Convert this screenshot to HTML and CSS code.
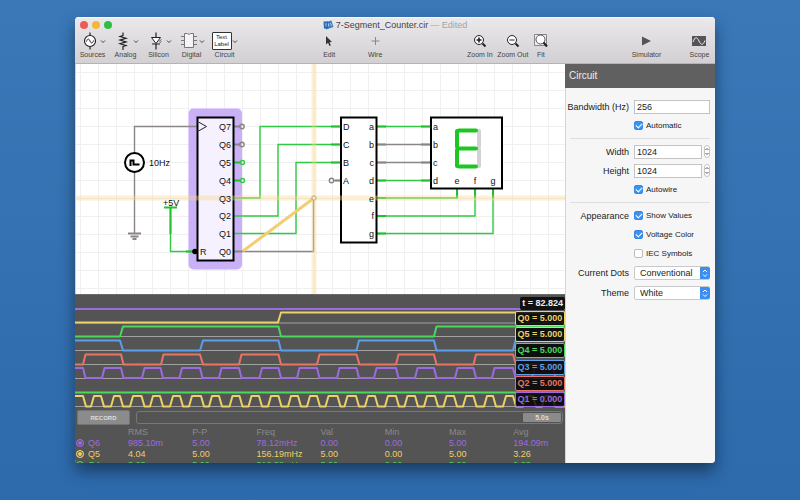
FILE: index.html
```html
<!DOCTYPE html>
<html lang="en">
<head>
<meta charset="utf-8">
<title>7-Segment_Counter.cir</title>
<link rel="stylesheet" href="styles.css">
</head>
<body>
<div class="window">
  <header class="chrome">
    <div class="titlebar">
      <div class="lights">
        <button class="light close" aria-label="Close"></button>
        <button class="light minimize" aria-label="Minimize"></button>
        <button class="light maximize" aria-label="Zoom window"></button>
      </div>
      <h1 class="title">
        <svg width="11" height="10" viewBox="0 0 11 10"><path d="M1 2.500 8.500.5 10.500 7 3 9.500Z" fill="#3c7fc4"/><path d="M.5 1.500h4.500l.5 7H1Z" fill="#2b69ad"/><path d="M3 3v3.500M5.500 3.500v3M7.500 3l1 3" stroke="#a9cdf0" stroke-width="1" fill="none"/></svg>
        <span>7-Segment_Counter.cir</span>
        <span class="edited">— Edited</span>
      </h1>
    </div>
    <nav class="toolbar">
      <div class="group">
        <button class="tool"><span class="glyph">
          <svg width="20" height="18" viewBox="0 0 20 18" fill="none" stroke="#222"><circle cx="10" cy="9" r="5.500" stroke-width="1.200" fill="#fff"/><path d="M10 .5v3M10 14.500v3" stroke-width="1.200"/><path d="M6.500 9.500c1-3.500 2.500-3 3.500-.5s2.500 3 3.500-.5"/></svg>
          <svg class="chev" width="6" height="5" viewBox="0 0 6 5"><path d="M1 1.500 3 3.500 5 1.500"/></svg></span>Sources</button>
        <button class="tool"><span class="glyph">
          <svg width="20" height="18" viewBox="0 0 20 18" fill="none" stroke="#222" stroke-width="1.200"><path d="M10 .5v3l-3 1 6 1.800-6 1.800 6 1.800-6 1.800 6 1.800-3 1v3.500"/></svg>
          <svg class="chev" width="6" height="5" viewBox="0 0 6 5"><path d="M1 1.500 3 3.500 5 1.500"/></svg></span>Analog</button>
        <button class="tool"><span class="glyph">
          <svg width="20" height="18" viewBox="0 0 20 18" fill="none" stroke="#222"><path d="M10 .5v5M10 12v5.500" stroke-width="1.200"/><path d="M5.500 5.500h9L10 11.500Z" fill="#fff"/><path d="M6 12h8" stroke-width="1.200"/><path d="m13 9.500 2.500-2M13.500 11l2-1.500" stroke="#666"/></svg>
          <svg class="chev" width="6" height="5" viewBox="0 0 6 5"><path d="M1 1.500 3 3.500 5 1.500"/></svg></span>Silicon</button>
        <button class="tool"><span class="glyph">
          <svg width="20" height="18" viewBox="0 0 20 18" fill="none" stroke="#777"><path d="M5.500 1.500h3q1.500 2 3 0h3v14h-9Z" fill="#f4f4f4"/><path d="M2 4.500h3.500M2 8.500h3.500M2 12.500h3.500M14.500 4.500H18M14.500 8.500H18M14.500 12.500H18"/></svg>
          <svg class="chev" width="6" height="5" viewBox="0 0 6 5"><path d="M1 1.500 3 3.500 5 1.500"/></svg></span>Digital</button>
        <button class="tool"><span class="glyph">
          <span class="textlabel">Text<br>Label</span>
          <svg class="chev" width="6" height="5" viewBox="0 0 6 5"><path d="M1 1.500 3 3.500 5 1.500"/></svg></span>Circuit</button>
      </div>
      <div class="group modes">
        <button class="tool"><span class="glyph">
          <svg width="20" height="18" viewBox="0 0 20 18"><path d="M7 4v8.500l2-1.700 1.500 3.200 1.400-.7-1.500-3 2.600-.3Z" fill="#333"/></svg></span>Edit</button>
        <button class="tool"><span class="glyph">
          <svg width="20" height="18" viewBox="0 0 20 18"><path d="M10.500 5v8M6.500 9h8" stroke="#888" fill="none"/></svg></span>Wire</button>
      </div>
      <div class="group">
        <button class="tool"><span class="glyph">
          <svg width="20" height="18" viewBox="0 0 20 18" fill="none" stroke="#222"><circle cx="9" cy="8" r="4.500" fill="#fff"/><path d="M6.500 8h5M9 5.500v5" stroke-width="1.600"/><path d="m12.500 11.500 3 3" stroke-width="2"/></svg></span>Zoom In</button>
        <button class="tool"><span class="glyph">
          <svg width="20" height="18" viewBox="0 0 20 18" fill="none" stroke="#222"><circle cx="9" cy="8" r="4.500" fill="#fff"/><path d="M6.500 8h5"/><path d="m12.500 11.500 3 3" stroke-width="2"/></svg></span>Zoom Out</button>
        <button class="tool narrow"><span class="glyph">
          <svg width="20" height="18" viewBox="0 0 20 18" fill="none" stroke="#222"><path d="M3.500 2.500h12v11h-12Z" stroke="#888" fill="#eee"/><circle cx="9.500" cy="7.500" r="4.500" stroke="#555" fill="#fff"/><path d="m12.500 10.500 3.500 4" stroke-width="2"/></svg></span>Fit</button>
      </div>
      <div class="group run">
        <button class="tool"><span class="glyph">
          <svg width="20" height="18" viewBox="0 0 20 18"><path d="M6 4.500 15 9l-9 4.500Z" fill="#555"/></svg></span>Simulator</button>
        <button class="tool"><span class="glyph">
          <svg width="20" height="18" viewBox="0 0 20 18" fill="none"><path d="M3 4h14v10H3Z" fill="#555"/><path d="M4 10c2-5.500 4-5.500 6-1s4 4.500 6-.5" stroke="#eee"/></svg></span>Scope</button>
      </div>
    </nav>
  </header>

  <div class="body">
    <main class="workspace">
      <svg class="schematic" viewBox="75 64 490 230" role="img" aria-label="Circuit schematic">
        <defs>
          <pattern id="grid" x="80" y="72" width="18" height="18" patternUnits="userSpaceOnUse"><path d="M.5 0v18M0 .5h18" stroke="#f0f0f0" fill="none"/></pattern>
        </defs>
        <rect x="75" y="64" width="490" height="230" fill="#fff"/>
        <rect x="75" y="64" width="490" height="230" fill="url(#grid)"/>
        <path d="M75.500 64v230" stroke="#b9d4fb"/>
        <rect x="188.500" y="108.500" width="53.500" height="161" rx="5" fill="#c9b0f7"/>
        <g class="wire idle">
          <path d="M134.500 153v-26.500H198M134.500 172v61M242 251.500h71.500V200"/>
          <path class="stub" d="M128 233.500h13M130.500 236.500h8M132.500 239h4"/>
          <path d="M377 144.500h53M377 162.500h53M333 180.500h7"/>
          <path class="stub" d="M234 126.500h6M234 144.500h6M234 251.500h8M377 144.500h9M421 144.500h9M377 162.500h9M421 162.500h9M335 180.500h5"/>
          <circle cx="242" cy="126.500" r="2.200"/><circle cx="242" cy="144.500" r="2.200"/><circle cx="331.500" cy="180.500" r="2.200"/>
        </g>
        <g class="wire live">
          <path d="M234 198h26v-71.500h80M234 216h44v-71.500h62M234 233.500h62v-71h44"/>
          <path d="M170.500 208v43.500H193M377 126.500h53M377 180.500h53M377 198h80v-9M377 216h98v-27M377 233.500h116V189"/>
          <path class="stub" d="M164 207.500h13M170.500 208v26M186 251.500h8M234 162.500h7M234 180.500h7M331 126.500h9M331 144.500h9M331 162.500h9M377 126.500h9M421 126.500h9M377 180.500h9M421 180.500h9M377 198h9M377 216h9M377 233.500h9M457 189v9M475 189v9M493 189v9"/>
          <circle cx="242.500" cy="162.500" r="2"/><circle cx="242.500" cy="180.500" r="2"/>
        </g>
        <g class="chip">
          <rect x="197.500" y="117.500" width="36" height="143" fill="#f6f1ff"/>
          <rect x="341" y="117.500" width="35.500" height="125"/>
          <rect x="431" y="117.500" width="71" height="71"/>
          <circle cx="134.500" cy="162.500" r="9.500"/>
          <path d="M130.500 166v-5.500h3v4h6" fill="none"/>
          <circle cx="195" cy="251.500" r="1.800" fill="#000"/>
        </g>
        <path d="m198.500 122 8 4.500-8 4.500" fill="none" stroke="#222"/>
        <g class="guide"><path d="M314 64v230M75 198h490"/></g>
        <path d="m243 251 71-53" stroke="#f3cd70" stroke-width="3"/>
        <circle cx="314" cy="198" r="2.200" fill="#fbe6b8" stroke="#b9a470"/>
        <g class="seg off"><path d="M479 131v16M479 150v16"/></g>
        <g class="seg"><path d="M459 130.500h17M459 148.500h17M459 166.500h17M457 131v16M457 150v16"/></g>
        <g class="label">
          <text x="149" y="166">10Hz</text><text x="163" y="206">+5V</text><text x="200" y="255">R</text>
          <text x="343" y="130">D</text><text x="343" y="148">C</text><text x="343" y="166">B</text><text x="343" y="184">A</text>
          <text x="433" y="130">a</text><text x="433" y="148">b</text><text x="433" y="166">c</text><text x="433" y="184">d</text>
        </g>
        <g class="label end">
          <text x="231" y="130">Q7</text><text x="231" y="148">Q6</text><text x="231" y="166">Q5</text><text x="231" y="184">Q4</text>
          <text x="231" y="202">Q3</text><text x="231" y="219">Q2</text><text x="231" y="237">Q1</text><text x="231" y="255">Q0</text>
          <text x="374" y="130">a</text><text x="374" y="148">b</text><text x="374" y="166">c</text><text x="374" y="184">d</text>
          <text x="374" y="202">e</text><text x="374" y="219">f</text><text x="374" y="237">g</text>
        </g>
        <g class="label mid"><text x="457" y="184">e</text><text x="475" y="184">f</text><text x="493" y="184">g</text></g>
      </svg>

      <section class="scope">
        <div class="traces">
          <svg viewBox="75 294 490 115" role="img" aria-label="Signal traces">
            <path class="axis" d="M75 323h490M75 336.500h490M75 350.500h490M75 364.500h490M75 378.500h490M75 406.500h490"/>
            <g class="trace">
              <path class="violet" d="M75 309h490"/>
              <path class="yellow" d="M75 322.500H278l3-10H565"/>
              <path class="green" d="M75 336.500h45l3-10H278.500l2.500 10H434l2.500-10H565"/>
              <path class="blue" d="M75 340.500h45l3 10h77l3-10h75.500l2.500 10h75.500l2.500-10H434l2.500 10H513l2.500-10H565"/>
              <path class="red" d="M75 364.500h8l2.500-10H121l2.500 10H161l2.500-10H200l3 10h36l2.500-10h37l2.500 10h36l2.500-10h37l3 10H396l2.500-10H434l2.500 10H473.500l2.500-10H513l3 10H565"/>
              <path class="violet" d="M75 368h8l2.500 10H102l2.500-10H121l2.500 10H142l2.500-10H160.500l2.500 10H179.500l2.500-10H200l2.500 10H219l2.500-10H239l2.500 10H259.500l2.500-10H278.500l2.500 10H297l2.500-10H317l2.500 10H337l2.500-10H356.500l2.500 10H374l2.500-10H396l2.500 10H415l2.500-10H434l2.500 10H455l2.500-10H473.500l2.500 10H492l2.500-10H513l2.500 10H532l2.500-10H553l2.500 10H565"/>
              <path class="green" d="M75 392.500h490"/>
              <path class="yellow" d="M75 396H83L86 406.500H91L94 396H101L104 406.500H111L114 396H120L123 406.500H130L133 396H141.500L144.500 406.500H150L153 396H160L163 406.500H170L173 396H180L183 406.500H189L192 396H201L204 406.500H209L212 396H219L222 406.500H229.500L232.500 396H239.500L242.500 406.500H248.500L251.500 396H259L262 406.500H268L271 396H278.500L281.500 406.500H288L291 396H298L301 406.500H307L310 396H317L320 406.500H325.500L328.500 396H337.500L340.500 406.500H344.500L347.500 396H356L359 406.500H365L368 396H375L378 406.500H385L388 396H396L399 406.500H404.500L407.500 396H415L418 406.500H424L427 396H435L438 406.500H443.500L446.500 396H454L457 406.500H463L466 396H473.500L476.500 406.500H484L487 396H493L496 406.500H503L506 396H513L516 406.500H523L526 396H533L536 406.500H542L545 396H552L555 406.500H565"/>
            </g>
          </svg>
          <div class="readouts">
            <output class="time">t = 82.824</output>
            <output class="yellow">Q0 = 5.000</output>
            <output class="yellow">Q5 = 5.000</output>
            <output class="green">Q4 = 5.000</output>
            <output class="blue">Q3 = 5.000</output>
            <output class="red">Q2 = 5.000</output>
            <output class="violet">Q1 = 0.000</output>
          </div>
        </div>
        <div class="controls">
          <button class="record">RECORD</button>
          <div class="timeline"><button class="span">5.0s</button></div>
        </div>
        <div class="stats">
          <table>
            <thead><tr><th class="name"></th><th>RMS</th><th>P-P</th><th>Freq</th><th>Val</th><th>Min</th><th>Max</th><th>Avg</th></tr></thead>
            <tbody>
              <tr class="violet"><td class="name"><i class="dot"></i>Q6</td><td>985.10m</td><td>5.00</td><td>78.12mHz</td><td>0.00</td><td>0.00</td><td>5.00</td><td>194.09m</td></tr>
              <tr class="yellow"><td class="name"><i class="dot"></i>Q5</td><td>4.04</td><td>5.00</td><td>156.19mHz</td><td>5.00</td><td>0.00</td><td>5.00</td><td>3.26</td></tr>
              <tr class="green"><td class="name"><i class="dot"></i>Q4</td><td>3.63</td><td>5.00</td><td>312.38mHz</td><td>5.00</td><td>0.00</td><td>5.00</td><td>2.63</td></tr>
            </tbody>
          </table>
        </div>
      </section>
    </main>

    <aside class="inspector">
      <h2>Circuit</h2>
      <form>
        <fieldset>
          <div class="row"><label class="name" for="bw">Bandwidth (Hz)</label><input class="field" id="bw" type="text" value="256"></div>
          <div class="row"><label class="check"><input type="checkbox" checked>Automatic</label></div>
        </fieldset>
        <fieldset>
          <div class="row"><label class="name" for="w">Width</label><div class="pair"><input class="field" id="w" type="text" value="1024">
            <button type="button" class="stepper" aria-label="Step width"><svg width="6" height="11" viewBox="0 0 6 11"><path d="M1.500 4 3 2.500 4.500 4M1.500 7 3 8.500 4.500 7"/></svg></button></div></div>
          <div class="row"><label class="name" for="h">Height</label><div class="pair"><input class="field" id="h" type="text" value="1024">
            <button type="button" class="stepper" aria-label="Step height"><svg width="6" height="11" viewBox="0 0 6 11"><path d="M1.500 4 3 2.500 4.500 4M1.500 7 3 8.500 4.500 7"/></svg></button></div></div>
          <div class="row"><label class="check"><input type="checkbox" checked>Autowire</label></div>
        </fieldset>
        <fieldset>
          <div class="row"><span class="name">Appearance</span><label class="check"><input type="checkbox" checked>Show Values</label></div>
          <div class="row"><label class="check"><input type="checkbox" checked>Voltage Color</label></div>
          <div class="row"><label class="check"><input type="checkbox">IEC Symbols</label></div>
          <div class="row tall"><label class="name" for="dots">Current Dots</label><div class="popup"><select id="dots"><option>Conventional</option></select><svg width="10" height="12" viewBox="0 0 10 12"><path d="M3 5l2-2 2 2M3 7.500l2 2 2-2"/></svg></div></div>
          <div class="row tall"><label class="name" for="theme">Theme</label><div class="popup"><select id="theme"><option>White</option></select><svg width="10" height="12" viewBox="0 0 10 12"><path d="M3 5l2-2 2 2M3 7.500l2 2 2-2"/></svg></div></div>
        </fieldset>
      </form>
    </aside>
  </div>
</div>
</body>
</html>
```
FILE: styles.css
```css
* { box-sizing: border-box; }

body {
  margin: 0;
  min-height: 100vh;
  padding: 17px 85px 37px 75px;
  background: linear-gradient(#3a78b8, #2d6aac);
  font-family: "Liberation Sans", Arial, sans-serif;
  font-size: 9px;
  color: #222;
}

button, input, select { font: inherit; color: inherit; margin: 0; padding: 0; }
button { border: 0; background: none; }
svg { display: block; }

.window {
  display: flex;
  flex-direction: column;
  height: calc(100vh - 54px);
  border-radius: 4px;
  overflow: hidden;
  background: #f6f6f6;
  box-shadow: 0 8px 16px rgba(0, 0, 0, .45);
}

/* Title bar and toolbar */
.chrome {
  background: linear-gradient(#ebe9eb, #d2d0d2);
  border-bottom: 1px solid #b5b3b5;
  box-shadow: inset 0 1px #f8f8f8;
}
.titlebar {
  display: grid;
  grid-template-columns: 1fr auto 1fr;
  align-items: center;
  height: 15px;
  padding: 0 5px;
}
.lights { display: flex; gap: 4px; }
.light { width: 8px; height: 8px; border-radius: 50%; }
.close { background: #ee5b55; }
.minimize { background: #f5b63d; }
.maximize { background: #2fbe45; }
.title {
  display: flex;
  align-items: center;
  gap: 2px;
  margin: 0;
  font-size: 9px;
  font-weight: normal;
  color: #444;
}
.edited { color: #a5a3a5; }

.toolbar {
  display: flex;
  justify-content: space-between;
  height: 31px;
  padding-left: 1px;
}
.group { display: flex; }
.modes { gap: 13px; }
.run { gap: 22px; padding-left: 7px; }
.tool {
  display: flex;
  flex-direction: column;
  align-items: center;
  gap: 1px;
  width: 33px;
  font-size: 7px;
  line-height: 8px;
  white-space: nowrap;
  color: #444;
}
.run .tool { width: 31px; }
.narrow { width: 23px; }
.glyph { display: flex; align-items: center; height: 18px; }
.chev path { fill: none; stroke: #444; }
.textlabel {
  width: 20px;
  padding: 1px 0;
  border: 1px solid #333;
  border-radius: 1px;
  background: #fff;
  font-size: 6px;
  line-height: 7px;
  color: #222;
}

/* Main split */
.body {
  display: grid;
  grid-template-columns: 1fr 150px;
  flex: 1;
  min-height: 0;
}
.workspace { display: flex; flex-direction: column; min-width: 0; min-height: 0; }
.schematic { width: 100%; flex: none; }

.wire { fill: none; stroke-width: 1.4; }
.wire .stub { stroke-width: 2; }
.idle { stroke: #8b8586; }
.live { stroke: #2fc943; }
.live .stub { stroke: #1fc12c; }
.chip { fill: #fff; stroke: #000; stroke-width: 2; }
.guide { fill: none; stroke: #f7d68e; stroke-opacity: .4; stroke-width: 5; }
.seg { fill: none; stroke: #1cc723; stroke-width: 4; stroke-linecap: round; }
.off { stroke: #d2d2d2; }
.label { font-size: 9px; fill: #111; }
.end { text-anchor: end; }
.mid { text-anchor: middle; }

/* Scope */
.scope {
  display: flex;
  flex-direction: column;
  flex: 1;
  min-height: 0;
  overflow: hidden;
  background: #545454;
  border-top: 1px solid #6a6a6a;
}
.traces { position: relative; margin-top: -1px; }
.traces svg { width: 100%; }
.axis { fill: none; stroke: #a0a0a0; }
.trace { fill: none; stroke-width: 2; stroke-linejoin: round; }
.trace path { stroke: currentColor; }
.violet { color: #9b6be0; }
.yellow { color: #ecd068; }
.green { color: #4bd75c; }
.blue { color: #5b9fe6; }
.red { color: #ea7463; }

.readouts {
  position: absolute;
  top: 3px;
  right: 0;
  bottom: 2px;
  display: flex;
  flex-direction: column;
  justify-content: space-between;
  align-items: flex-end;
}
.readouts output {
  width: 50px;
  border: 1px solid;
  border-radius: 2px;
  background: rgba(0, 0, 0, .82);
  font-weight: bold;
  line-height: 13px;
  text-align: center;
}
.readouts .time { width: auto; padding: 0 2px; border: 0; background: #111; color: #eee; }

.controls {
  display: flex;
  align-items: center;
  gap: 6px;
  height: 17px;
  padding: 0 2px;
}
.record {
  width: 53px;
  height: 15px;
  border: 1px solid #747474;
  border-radius: 2px;
  background: #8b8b8b;
  color: #ddd;
  font-size: 6px;
  font-weight: bold;
}
.timeline {
  display: flex;
  justify-content: flex-end;
  flex: 1;
  padding: 1px;
  border: 1px solid #777;
  border-radius: 3px;
}
.span {
  width: 38px;
  height: 9px;
  border-radius: 1px;
  background: #8b8b8b;
  color: #ddd;
  font-size: 7px;
  font-weight: bold;
  line-height: 9px;
}

.stats { flex: 1; min-height: 0; overflow: hidden; padding-top: 1px; }
.stats table { width: 100%; table-layout: fixed; border-collapse: collapse; }
.stats th, .stats td {
  width: 13.1%;
  height: 11px;
  padding: 0;
  font-weight: normal;
  line-height: 11px;
  text-align: left;
  white-space: nowrap;
}
.stats .name { width: 53px; }
.stats th:last-child, .stats td:last-child { width: auto; }
.stats th { color: #8a8a8a; }
.dot {
  display: inline-block;
  width: 8px;
  height: 8px;
  margin: 0 4px 0 1px;
  border: 1px solid;
  border-radius: 50%;
  background: currentColor;
  box-shadow: inset 0 0 0 1px #545454;
  vertical-align: -1px;
}

/* Inspector */
.inspector { border-left: 1px solid #d5d5d5; background: #f6f6f6; }
.inspector h2 {
  margin: 0 0 0 -1px;
  padding: 0 4px;
  background: #606060;
  color: #eee;
  font-size: 10px;
  font-weight: normal;
  line-height: 24px;
}
.inspector form { padding: 9px 5px 0 4px; }
fieldset { margin: 0; padding: 0; border: 0; min-width: 0; }
fieldset + fieldset { margin-top: 3px; padding-top: 3px; border-top: 1px solid #dedede; }
.row {
  display: grid;
  grid-template-columns: 59px 1fr;
  column-gap: 5px;
  align-items: center;
  height: 19px;
}
.tall { height: 20px; }
.row .name { justify-self: end; white-space: nowrap; }
.check {
  grid-column: 2;
  display: flex;
  align-items: center;
  gap: 3px;
  font-size: 8px;
  white-space: nowrap;
}
.check input {
  appearance: none;
  display: grid;
  place-items: center;
  width: 9px;
  height: 9px;
  border: 1px solid #bbb;
  border-radius: 2px;
  background: #fff;
}
.check input:checked { border-color: #3489e8; background: #3d92ee; }
.check input:checked::after {
  content: "";
  width: 3px;
  height: 5px;
  margin-top: -1px;
  border: solid #fff;
  border-width: 0 1px 1px 0;
  transform: rotate(45deg);
}
.field {
  width: 100%;
  min-width: 0;
  height: 14px;
  padding: 0 2px;
  border: 1px solid #c4c4c4;
  background: #fff;
}
.pair { display: flex; align-items: center; gap: 2px; }
.stepper { flex: none; border: 1px solid #c4c4c4; border-radius: 3px; background: #fff; }
.stepper svg { margin: 0 -1px; }
.stepper path, .popup path { fill: none; stroke: #555; }
.popup { position: relative; }
.popup select {
  appearance: none;
  display: block;
  width: 100%;
  height: 14px;
  padding: 0 12px 0 5px;
  border: 1px solid #c9c9c9;
  border-radius: 2px;
  background: #fff;
}
.popup svg {
  position: absolute;
  top: 1px;
  right: 0;
  border-radius: 0 2px 2px 0;
  background: #3b8ff0;
  pointer-events: none;
}
.popup path { stroke: #fff; }
```
